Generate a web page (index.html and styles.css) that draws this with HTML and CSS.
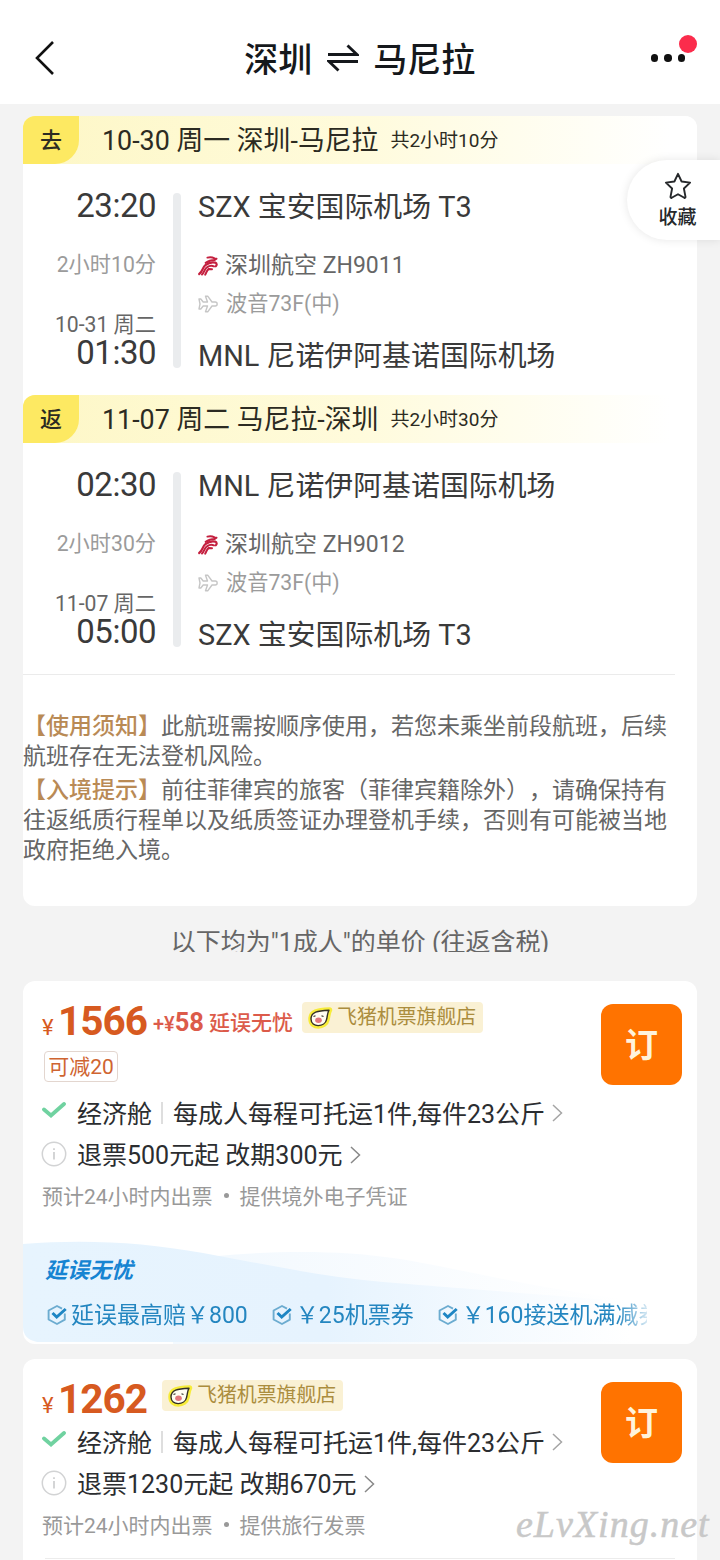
FILE: index.html
```html
<!DOCTYPE html>
<html lang="zh-CN">
<head>
<meta charset="utf-8">
<title>深圳 ⇌ 马尼拉</title>
<link rel="stylesheet" href="styles.css">
</head>
<body>
<svg class="defs" width="0" height="0">
  <defs>
    <symbol id="airline" viewBox="0 0 20 20">
      <g fill="none" stroke="#c4203f" stroke-linecap="round" stroke-linejoin="round">
        <path stroke-width="2" d="M9.500 1.600c2.600-.8 5-.4 7 .8l2 .3-1.800 1.200c-3.400 0-6 .6-9 3"/>
        <path stroke-width="2.200" d="M1.200 18c3.600-2.600 3.200-6.500 6.200-8.800 3-2.300 6.500-3.400 9.800-2.600 1.800.8 1.900 2.500.6 3.700"/>
        <path stroke-width="2" d="M4 18.500c2.400-2.400 2.400-5.300 5-7.200 2.200-1.500 4.800-1.800 7-.9"/>
        <path stroke-width="2" d="M7.200 18.600c1.600-2.200 1.200-4.300 3.600-5.600l3.200.2"/>
      </g>
    </symbol>
    <symbol id="plane" viewBox="0 0 20 18">
      <path d="M1 4h1.800l2.400 3h4.300L7.500 1.200h2.200L14 7h3.200c2.600 0 2.600 4 0 4H14l-4.300 5.800H7.500L9.500 11H5.200l-2.400 3H1l1-5z" fill="none" stroke="#c6c6c6" stroke-width="1.400" stroke-linejoin="round"/>
    </symbol>
    <symbol id="tick" viewBox="0 0 24 16">
      <path d="M2 7.500l7 6L22 2" fill="none" stroke="#70d2a0" stroke-width="3.800" stroke-linecap="round" stroke-linejoin="miter"/>
    </symbol>
    <symbol id="info" viewBox="0 0 26 26">
      <circle cx="13" cy="13" r="11.700" fill="none" stroke="#d2d3d4" stroke-width="1.500"/>
      <path d="M13 11v7.500M13 7.200v1.800" stroke="#d2d3d4" stroke-width="1.900" fill="none"/>
    </symbol>
    <symbol id="more" viewBox="0 0 11 18">
      <path d="M1 1l8.500 8L1 17" fill="none" stroke="currentColor" stroke-width="1.500"/>
    </symbol>
    <symbol id="pig" viewBox="0 0 26 24">
      <path d="M4 13C4 6 10 4.500 22.500 4 20.800 7 21 9.500 20 13.500 18.500 22 4 22.500 4 13z" fill="#f7ec3a" stroke="#f7ec3a" stroke-width="5.500" stroke-linejoin="round"/>
      <path d="M4 13C4 6 10.500 4.600 22 4.200 20.300 7.300 20.600 9.500 19.600 13.300 18 21.500 4 22 4 13z" fill="#fffdf2" stroke="#333026" stroke-width="1.400" stroke-linejoin="round"/>
      <ellipse cx="11.500" cy="14.200" rx="3.300" ry="2.700" fill="#e2777c"/>
      <path d="M6.500 10.500l2-.8M14.500 9.700l2 .8" stroke="#333026" stroke-width="1.200"/>
    </symbol>
    <symbol id="hex" viewBox="0 0 20 22">
      <path d="M17.800 9.500v6.200L10 20 1.600 15.500V6.500L10 2l5 2.700" fill="none" stroke="#6cacd0" stroke-width="1.900" stroke-linejoin="round"/>
      <path d="M5.500 9l4.200 4 9-8" fill="none" stroke="#1e86c4" stroke-width="3"/>
    </symbol>
  </defs>
</svg>

<header class="topbar">
  <svg class="back" viewBox="0 0 22 36"><path d="M19 2L3 18l16 16" fill="none" stroke="#111" stroke-width="2.600"/></svg>
  <h1 class="route"><span>深圳</span>
    <svg class="swap" viewBox="0 0 32 28"><path d="M1 10.500h29L20.500 1.500M31 17.500H2l9.500 9" fill="none" stroke="#15181c" stroke-width="2.900"/></svg>
    <span>马尼拉</span></h1>
  <div class="menu"><i></i><i></i><i></i><b class="dot"></b></div>
</header>

<main class="page">
  <section class="card trip">
    <div class="strip"><span class="flag">去</span><span class="when">10-30 周一 深圳-马尼拉</span><span class="total">共2小时10分</span></div>
    <div class="leg">
      <div class="times"><div class="clock">23:20</div><div class="dur">2小时10分</div><div class="date">10-31 周二</div><div class="clock end">01:30</div></div>
      <div class="bar"></div>
      <div class="places"><div class="port">SZX 宝安国际机场 T3</div><div class="carrier"><svg><use href="#airline"/></svg>深圳航空 ZH9011</div><div class="craft"><svg><use href="#plane"/></svg>波音73F(中)</div><div class="port last">MNL 尼诺伊阿基诺国际机场</div></div>
    </div>
    <div class="strip"><span class="flag">返</span><span class="when">11-07 周二 马尼拉-深圳</span><span class="total">共2小时30分</span></div>
    <div class="leg">
      <div class="times"><div class="clock">02:30</div><div class="dur">2小时30分</div><div class="date">11-07 周二</div><div class="clock end">05:00</div></div>
      <div class="bar"></div>
      <div class="places"><div class="port">MNL 尼诺伊阿基诺国际机场</div><div class="carrier"><svg><use href="#airline"/></svg>深圳航空 ZH9012</div><div class="craft"><svg><use href="#plane"/></svg>波音73F(中)</div><div class="port last">SZX 宝安国际机场 T3</div></div>
    </div>
    <div class="notice">
      <p><em>【使用须知】</em>此航班需按顺序使用，若您未乘坐前段航班，后续航班存在无法登机风险。</p>
      <p><em>【入境提示】</em>前往菲律宾的旅客（菲律宾籍除外），请确保持有往返纸质行程单以及纸质签证办理登机手续，否则有可能被当地政府拒绝入境。</p>
    </div>
    <div class="fav"><svg viewBox="0 0 28 28"><path d="M14 1.800l3.600 7.700 8.500 1.100-6.200 5.900 1.600 8.400c.1.900-.6 1.200-1.200.9L14 22.200l-6.300 3.600c-.6.300-1.300 0-1.200-.9l1.600-8.400-6.200-5.900 8.500-1.100z" fill="none" stroke="#26282b" stroke-width="1.900" stroke-linejoin="round"/></svg><span>收藏</span></div>
  </section>

  <div class="caption">以下均为"1成人"的单价 (往返含税)</div>

  <section class="card">
    <div class="offer">
      <div class="detail">
        <div class="price"><span class="yen">¥</span><span class="amount">1566</span><span class="plus">+¥<b>58</b></span><span class="extra">延误无忧</span><span class="shop"><svg><use href="#pig"/></svg>飞猪机票旗舰店</span></div>
        <div class="coupon">可减20</div>
        <div class="row"><svg class="tick"><use href="#tick"/></svg><span>经济舱</span><i class="sep"></i><span>每成人每程可托运1件,每件23公斤</span><svg class="more"><use href="#more"/></svg></div>
        <div class="row"><svg class="info"><use href="#info"/></svg><span>退票500元起 改期300元</span><svg class="more dark"><use href="#more"/></svg></div>
        <div class="foot"><span>预计24小时内出票</span><i></i><span>提供境外电子凭证</span></div>
      </div>
      <button class="book">订</button>
    </div>
    <div class="promo">
      <svg class="wave" viewBox="0 0 674 103" preserveAspectRatio="none">
        <defs>
          <linearGradient id="w1" x1="0" x2="674" y1="0" y2="0" gradientUnits="userSpaceOnUse"><stop offset="0" stop-color="#e7f4fe"/><stop offset=".45" stop-color="#e6f3fe"/><stop offset=".9" stop-color="#ffffff"/></linearGradient>
          <linearGradient id="w2" x1="0" x2="674" y1="0" y2="0" gradientUnits="userSpaceOnUse"><stop offset=".3" stop-color="#f3f9fe"/><stop offset=".9" stop-color="#ffffff"/></linearGradient>
        </defs>
        <path d="M150 20C230 9 310 8 370 17S500 45 600 58L674 103H150z" fill="url(#w2)"/>
        <path d="M0 3C60-2 120 1 180 12S300 36 360 41 500 52 674 66V101H14Q0 98 0 86z" fill="url(#w1)"/>
      </svg>
      <div class="title">延误无忧</div>
      <div class="perks"><span><svg><use href="#hex"/></svg>延误最高赔￥800</span><span><svg><use href="#hex"/></svg>￥25机票券</span><span><svg><use href="#hex"/></svg>￥160接送机满减券</span></div>
    </div>
  </section>

  <section class="card second">
    <div class="offer">
      <div class="detail">
        <div class="price"><span class="yen">¥</span><span class="amount">1262</span><span class="shop near"><svg><use href="#pig"/></svg>飞猪机票旗舰店</span></div>
        <div class="row"><svg class="tick"><use href="#tick"/></svg><span>经济舱</span><i class="sep"></i><span>每成人每程可托运1件,每件23公斤</span><svg class="more"><use href="#more"/></svg></div>
        <div class="row"><svg class="info"><use href="#info"/></svg><span>退票1230元起 改期670元</span><svg class="more dark"><use href="#more"/></svg></div>
        <div class="foot"><span>预计24小时内出票</span><i></i><span>提供旅行发票</span></div>
      </div>
      <button class="book">订</button>
    </div>
    <div class="rule"></div>
  </section>
</main>
<div class="watermark">eLvXing.net</div>
</body>
</html>
```
FILE: styles.css
```css
* { box-sizing: border-box; }
body {
  margin: 0;
  width: 720px;
  height: 1560px;
  overflow: hidden;
  position: relative;
  background: #f3f3f3;
  color: #333;
  font-family: Roboto, "Noto Sans CJK SC", sans-serif;
  white-space: nowrap;
  text-spacing-trim: space-all;
}
.defs { position: absolute; }
svg { display: block; flex: none; }

.topbar {
  display: flex;
  align-items: center;
  justify-content: space-between;
  height: 104px;
  padding: 12px 35px 0 34px;
  background: #fff;
}
.back { width: 22px; height: 36px; }
.route {
  display: flex;
  align-items: center;
  gap: 14.500px;
  margin: 3px 0 0 13px;
  color: #15181c;
  font-size: 34px;
  font-weight: 500;
  line-height: 44px;
}
.swap { width: 32px; height: 28px; margin-top: -4px; }
.menu { display: flex; gap: 6px; position: relative; }
.menu i { width: 7.500px; height: 7.500px; border-radius: 50%; background: #111; }
.dot {
  position: absolute;
  right: -12px;
  top: -19px;
  width: 18px;
  height: 18px;
  border-radius: 50%;
  background: #fb2c4c;
}

.page { padding: 12px 23px 0; }
.card { background: #fff; border-radius: 12px; overflow: hidden; }
.trip { height: 790px; position: relative; overflow: visible; }
.strip {
  display: flex;
  align-items: center;
  height: 48px;
  border-radius: 12px 12px 0 0;
  background: linear-gradient(90deg, #fdf7c6, #fffbdc 50%, #fff 96%);
  color: #2c2b22;
}
.flag {
  width: 56px;
  height: 48px;
  border-radius: 12px 0 24px 0;
  background: #fde962;
  font-size: 22px;
  font-weight: 500;
  line-height: 49px;
  text-align: center;
}
.when { margin: -4px 0 0 23px; font-size: 26.850px; }
.total { margin: -4px 0 0 12px; font-size: 19px; }

.leg { display: flex; height: 231px; }
.times { width: 133px; padding-top: 22px; text-align: right; }
.clock { font-size: 33px; line-height: 40px; letter-spacing: -.5px; color: #3a3a3a; }
.clock.end { line-height: 32px; }
.dur { margin-top: 24px; font-size: 21.200px; line-height: 30px; color: #9b9b9b; }
.date { margin-top: 33px; font-size: 21.200px; line-height: 24px; color: #666; }
.bar { width: 8px; height: 175px; margin: 29px 17px 0; border-radius: 4px; background: #eaecee; }
.places { padding-top: 23px; }
.port { font-size: 28.900px; line-height: 40px; color: #3a3a3a; }
.port.last { margin-top: 17px; }
.carrier { display: flex; align-items: center; gap: 7px; margin-top: 24px; font-size: 23px; line-height: 30px; color: #666; }
.carrier svg { width: 20px; height: 20px; }
.craft { display: flex; align-items: center; gap: 8px; margin-top: 8px; font-size: 21.200px; line-height: 30px; color: #9b9b9b; }
.craft svg { width: 20px; height: 18px; }

.notice {
  margin-right: 22px;
  padding-top: 37px;
  border-top: 1px solid #ebebeb;
  font-size: 23px;
  line-height: 30px;
  color: #666;
  white-space: normal;
  word-break: break-all;
}
.notice p { margin: 0 -12px 4px 0; padding-right: 12px; }
.notice em { font-style: normal; font-weight: 500; color: #b98a55; }

.fav {
  position: absolute;
  left: 604px;
  top: 44px;
  width: 93px;
  height: 80px;
  padding: 12px 0 0 8px;
  display: flex;
  flex-direction: column;
  align-items: center;
  border-radius: 40px 0 0 40px;
  background: #fff;
  box-shadow: 0 0 10px rgba(0, 0, 0, .1);
  color: #26282b;
  font-size: 19px;
  font-weight: 500;
  line-height: 24px;
}
.fav svg { width: 28px; height: 28px; margin-bottom: 6px; }

.caption {
  height: 46px;
  margin-bottom: 29px;
  padding-top: 21px;
  overflow: hidden;
  text-align: center;
  font-size: 25px;
  line-height: 32px;
  color: #666;
}

.offer { display: flex; padding: 0 15px 0 19px; }
.detail { flex: 1; min-width: 0; }
.price { display: flex; align-items: baseline; height: 70px; padding-top: 20px; color: #d75a20; line-height: 40px; }
.yen { width: 16px; font-size: 22px; }
.amount { width: 95px; font-size: 40.500px; font-weight: 700; letter-spacing: -1px; }
.plus { align-self: flex-start; width: 56px; font-size: 20px; font-weight: 500; line-height: 42px; color: #dc5b4a; }
.plus b { font-size: 25.500px; font-weight: 700; }
.extra { align-self: flex-start; width: 93px; font-size: 21px; font-weight: 500; line-height: 45px; color: #dc5b4a; }
.shop {
  align-self: flex-start;
  display: flex;
  align-items: center;
  gap: 4px;
  height: 31px;
  margin-top: 1px;
  padding: 0 7px 0 5px;
  border-radius: 4px;
  background: #faf1d4;
  color: #ab8d3e;
  font-size: 19.900px;
  line-height: 32px;
}
.shop.near { margin-left: 9px; }
.shop svg { width: 26px; height: 24px; }
.coupon {
  width: 74px;
  height: 31px;
  margin: 0 0 9px 2px;
  border: 1px solid #e3d6cf;
  border-radius: 4px;
  color: #cf6430;
  font-size: 21px;
  line-height: 31px;
  text-align: center;
}
.row { display: flex; align-items: center; height: 41.500px; font-size: 25px; color: #2b2d30; }
.tick { width: 24px; height: 16px; margin: -3px 11px 0 0; }
.info { width: 26px; height: 26px; margin: 2px 10px 0 -1px; }
.sep { width: 2px; height: 22px; margin: 2px 10px 0 9px; background: #dedede; }
.more { width: 11px; height: 18px; margin: 3px 0 0 7px; color: #a5a5a5; }
.more.dark { color: #888; }
.foot { display: flex; align-items: center; height: 42px; font-size: 21px; color: #999; }
.foot i { width: 5px; height: 5px; margin: 0 11px; border-radius: 50%; background: #999; }
.book {
  width: 81px;
  height: 81px;
  margin-top: 23px;
  padding: 3px 0 0;
  border: 0;
  border-radius: 12px;
  background: #ff7300;
  color: #fff3dc;
  font: 700 33px/78px Roboto, "Noto Sans CJK SC", sans-serif;
}

.promo { position: relative; height: 103px; margin-top: 25px; padding: 13px 50px 0 22px; }
.wave { position: absolute; left: 0; top: 0; width: 674px; height: 103px; }
.title { position: relative; font-size: 22px; font-weight: 700; font-style: italic; line-height: 34px; color: #1684d2; }
.perks {
  position: relative;
  display: flex;
  gap: 24px;
  margin: 11px 0 0 2px;
  overflow: hidden;
  font-size: 23px;
  line-height: 34px;
  color: #2486c0;
  -webkit-mask-image: linear-gradient(90deg, #000 570px, rgba(0, 0, 0, .2) 600px);
  mask-image: linear-gradient(90deg, #000 570px, rgba(0, 0, 0, .2) 600px);
}
.perks span { display: flex; flex: none; align-items: center; gap: 4px; }
.perks svg { width: 20px; height: 22px; margin-top: -3px; }

.second { height: 220px; margin-top: 15px; }
.second .price { height: 61px; }
.second .shop { margin-top: 1px; }
.rule { height: 1px; margin: 13px 22px 0; background: #ececec; }

.watermark {
  position: absolute;
  left: 516px;
  top: 1502px;
  font-family: "Liberation Serif", serif;
  font-style: italic;
  font-size: 38px;
  line-height: 44px;
  letter-spacing: 1px;
  color: #c8c8c8;
  -webkit-text-stroke: .5px #c8c8c8;
}
```
